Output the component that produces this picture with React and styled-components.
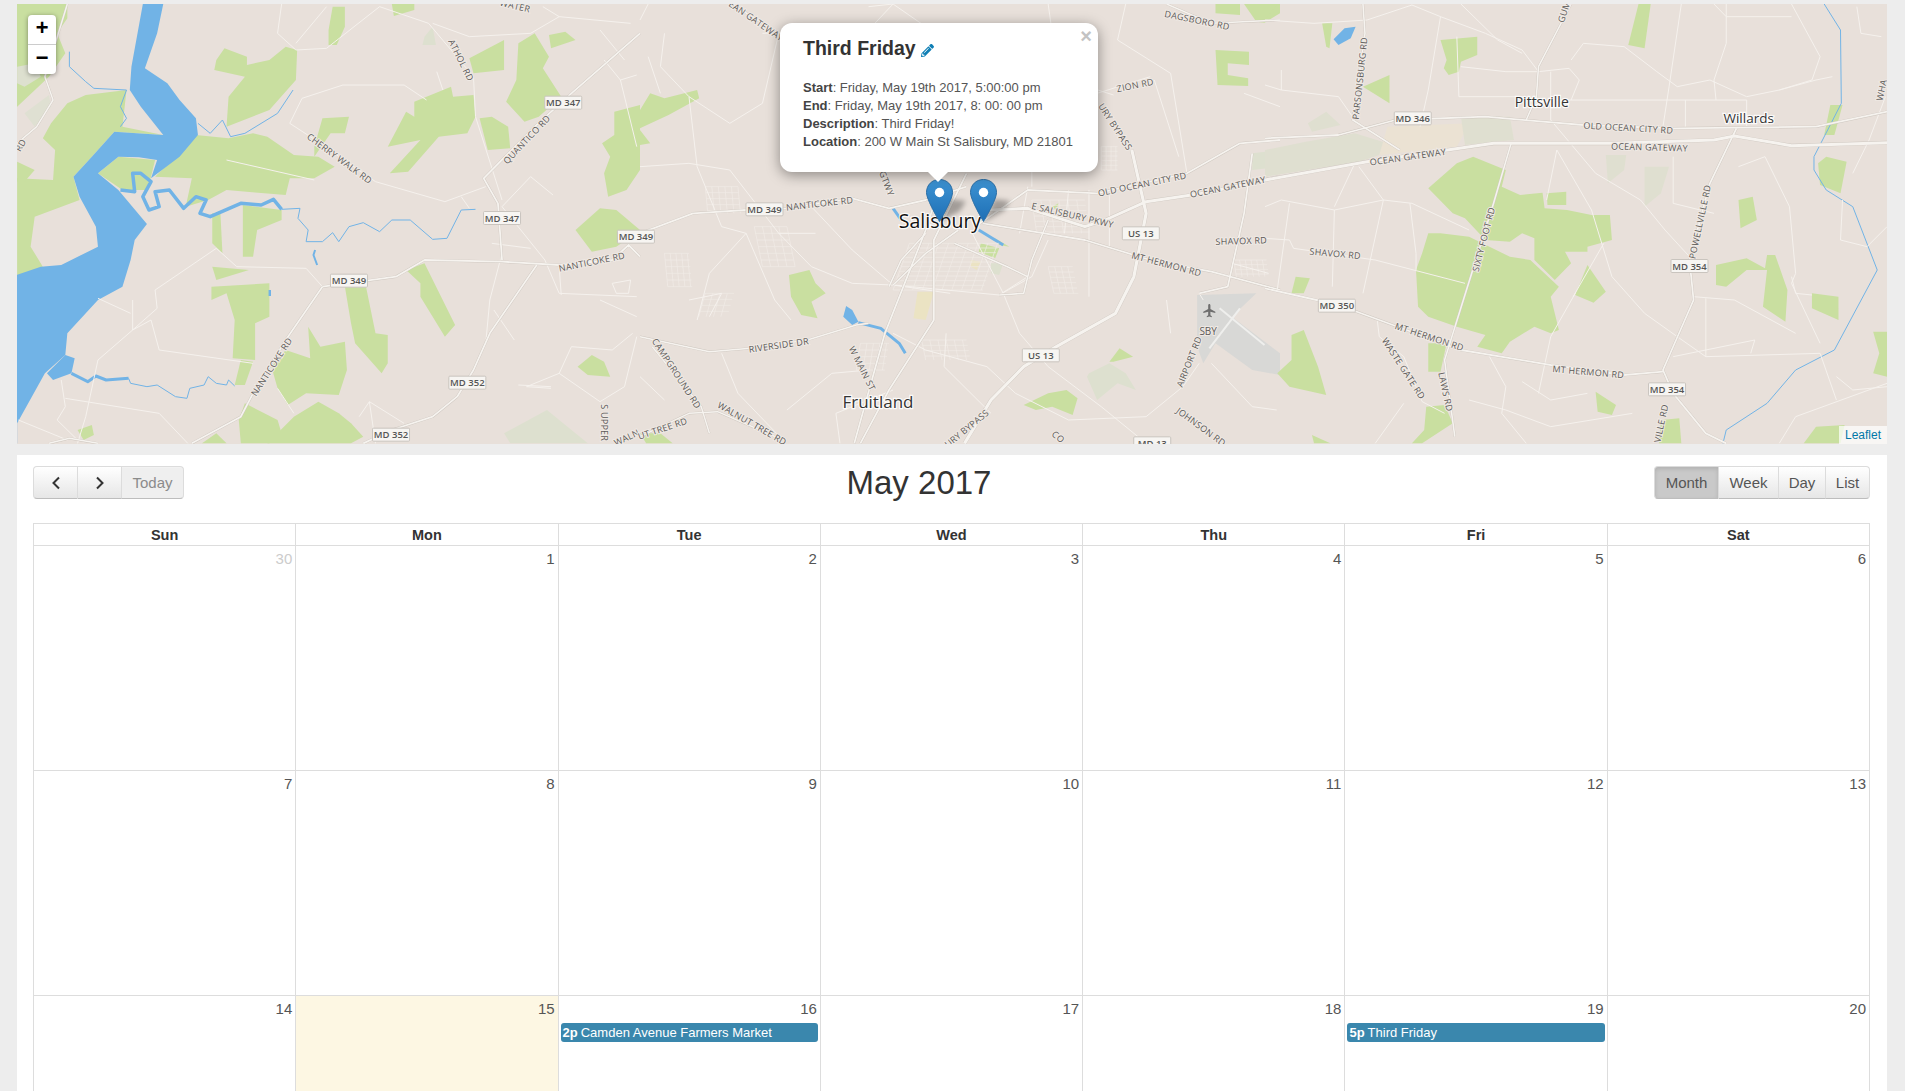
import React from 'react';
import styled, { createGlobalStyle } from 'styled-components';
import { FaPencilAlt } from 'react-icons/fa';

const Global = createGlobalStyle`
  html, body { margin: 0; height: 100%; overflow: hidden; background: #ededed; }
  body { font-family: "Liberation Sans", Arial, sans-serif; color: #333; }
  #root { height: 100%; }
`;

/* ---------- page ---------- */
const Page = styled.div`
  padding: 4px 18px 0 17px;
  height: 100%;
  box-sizing: border-box;
  overflow: hidden;
`;

/* ---------- map ---------- */
const MapFrame = styled.div`
  position: relative;
  height: 440px;
  overflow: hidden;
  background: #e8e0da;
`;
const MapCanvas = styled.svg`
  display: block;
  width: 100%;
  height: 100%;
`;
const BaseLayer = styled.g`
  filter: blur(0.4px);
`;
const RoadLabel = styled.text`
  font-family: "Open Sans", "Liberation Sans", sans-serif;
  font-size: 9px;
  letter-spacing: 0.25px;
  fill: #5c5a58;
  stroke: #efe9e4;
  stroke-width: 2px;
  paint-order: stroke;
  text-anchor: middle;
  dominant-baseline: central;
`;
const ShieldText = styled.text`
  font-family: "Open Sans", "Liberation Sans", sans-serif;
  font-size: 9.5px;
  font-weight: 600;
  fill: #555;
  text-anchor: middle;
  dominant-baseline: central;
`;
const TownLabel = styled.text`
  font-family: "Open Sans", "Noto Sans", sans-serif;
  font-size: ${p => p.$size}px;
  font-weight: ${p => p.$weight};
  fill: ${p => p.$fill};
  stroke: rgba(255, 255, 255, 0.85);
  stroke-width: 2.5px;
  paint-order: stroke;
  text-anchor: middle;
  dominant-baseline: central;
`;

const ZoomBox = styled.div`
  position: absolute;
  left: 11px;
  top: 11px;
  width: 28px;
  background: #fff;
  border-radius: 4px;
  box-shadow: 0 1px 5px rgba(0, 0, 0, 0.4);
`;
const ZoomButton = styled.div`
  height: 29px;
  display: flex;
  align-items: center;
  justify-content: center;
  font: bold 22px/1 "Lucida Console", "Liberation Mono", monospace;
  color: #000;
  & + & { border-top: 1px solid #ccc; }
`;
const Attribution = styled.div`
  position: absolute;
  right: 0;
  bottom: 0;
  padding: 0 6px;
  height: 18px;
  line-height: 18px;
  font-size: 12px;
  color: #0078a8;
  background: rgba(255, 255, 255, 0.7);
`;

const PinWrap = styled.svg`
  position: absolute;
  top: 175px;
  left: ${p => p.$left}px;
  width: 27px;
  height: 43px;
  overflow: visible;
`;

const Popup = styled.div`
  position: absolute;
  left: 763px;
  top: 19px;
  width: 318px;
  height: 149px;
  box-sizing: border-box;
  padding: 14px 23px 0;
  background: #fff;
  border-radius: 12px;
  box-shadow: 0 3px 14px rgba(0, 0, 0, 0.4);
  &::after {
    content: "";
    position: absolute;
    left: 148px;
    bottom: -10px;
    border-left: 10.5px solid transparent;
    border-right: 10.5px solid transparent;
    border-top: 10px solid #fff;
  }
`;
const PopupClose = styled.span`
  position: absolute;
  top: 5px;
  right: 6px;
  font: bold 20px/16px "Liberation Sans", sans-serif;
  color: #c3c3c3;
`;
const PopupTitle = styled.div`
  font-size: 19.5px;
  line-height: 22px;
  font-weight: bold;
  color: #333;
  display: flex;
  align-items: center;
  gap: 5px;
  svg { color: #0f7fb5; width: 13px; height: 13px; margin-top: 5px; }
`;
const PopupBody = styled.div`
  margin-top: 20px;
  font-size: 13px;
  line-height: 18px;
  color: #555;
  b { color: #444; }
`;

/* ---------- calendar ---------- */
const Panel = styled.section`
  margin-top: 11px;
  background: #fff;
  padding: 11px 17px 0 16px;
  min-height: 700px;
`;
const Toolbar = styled.div`
  display: flex;
  justify-content: space-between;
  align-items: center;
  height: 33px;
  margin-bottom: 24px;
`;
const MonthTitle = styled.h2`
  margin: 0;
  font-size: 33px;
  line-height: 33px;
  font-weight: normal;
  color: #333;
`;
const ButtonGroup = styled.div`
  display: flex;
  height: 33px;
`;
const ToolButton = styled.button`
  box-sizing: border-box;
  width: ${p => p.$w}px;
  height: 33px;
  margin: 0;
  padding: 0;
  display: flex;
  align-items: center;
  justify-content: center;
  font: 15px "Liberation Sans", sans-serif;
  color: ${p => (p.$faded ? '#8b8b8b' : '#555')};
  border: 1px solid #dcdcdc;
  border-left-width: ${p => (p.$first ? 1 : 0)}px;
  border-bottom-color: #bdbdbd;
  border-radius: ${p => (p.$first ? '4px 0 0 4px' : p.$last ? '0 4px 4px 0' : '0')};
  background: ${p =>
    p.$active ? '#c9c9c9' : p.$faded ? '#efefef' : 'linear-gradient(#ffffff, #e6e6e6)'};
  box-shadow: ${p =>
    p.$active
      ? 'inset 0 2px 4px rgba(0,0,0,.12)'
      : 'inset 0 1px 0 rgba(255,255,255,.2)'};
`;
const Table = styled.div`
  border-right: 1px solid #ddd;
`;
const HeadRow = styled.div`
  display: grid;
  grid-template-columns: repeat(7, 1fr);
  height: 22px;
  border-top: 1px solid #ddd;
  box-sizing: border-box;
`;
const HeadCell = styled.div`
  border-left: 1px solid #ddd;
  font-size: 14.5px;
  font-weight: bold;
  line-height: 22px;
  text-align: center;
  color: #333;
`;
const WeekRow = styled.div`
  display: grid;
  grid-template-columns: repeat(7, 1fr);
  height: 225px;
  border-top: 1px solid #ddd;
  box-sizing: border-box;
`;
const DayCell = styled.div`
  border-left: 1px solid #ddd;
  background: ${p => (p.$today ? '#fdf7e3' : '#fff')};
  min-width: 0;
`;
const DayNumber = styled.div`
  padding: 3px 3px 0 0;
  font-size: 15px;
  line-height: 20px;
  text-align: right;
  color: ${p => (p.$other ? '#ccc' : '#555')};
`;
const Event = styled.div`
  margin: 4px 2px 0 2px;
  height: 19px;
  padding-left: 2px;
  border-radius: 3px;
  background: #3a87ad;
  color: #fff;
  font-size: 13px;
  line-height: 19px;
  white-space: nowrap;
  overflow: hidden;
  b { margin-right: 3px; }
`;

/* ---------- map data: points are in zone coordinates ---------- */
const SX = 640 / 1568;
const SY = 1 / 3;
const OFF = { A: 0, B: 640, C: 1265 };
const px = (z, x) => OFF[z] + x * SX;
const py = y => y * SY;
const ang = a => {
  if (Math.abs(a) === 90) return a;
  return (Math.atan(Math.tan((a * Math.PI) / 180) * (SY / SX)) * 180) / Math.PI;
};

const GREEN = '#c9dfa0';
const PALE = '#dde0cf';
const WATER = '#71b3e6';

const shapes = {
  A: [
    [GREEN, '17,12 165,12 165,55 140,100 160,160 120,230 42,320 17,300'],
    ['#dde0cf', '42,200 85,190 100,230 60,260 42,250'],
    ['#dfe0d2', '60,340 120,285 125,320 85,380'],
    [GREEN, '42,535 130,540 135,450 105,415 125,370 165,310 210,285 310,270 300,380 400,405 280,395 225,470 180,530 195,600 85,650 75,740 105,800 42,830'],
    [GREEN, '42,485 85,510 60,545 42,545'],
    [GREEN, '480,405 380,530 470,535 455,620 510,600 555,570 700,585 710,535 770,535 820,500 780,470 720,465 655,410 620,400 560,415'],
    [GREEN, '240,520 290,470 380,480 370,530 360,570 300,570'],
    [GREEN, '550,145 605,170 605,195 660,180 700,140 728,150 725,240 660,330 555,380 560,290 600,230 525,210 530,180'],
    [GREEN, '815,20 845,20 845,80 825,135 805,135 805,90'],
    [GREEN, '960,12 1015,12 1015,30 965,48'],
    [GREEN, '1150,175 1235,120 1235,210 1160,220'],
    [GREEN, '1270,130 1310,100 1345,170 1330,205 1375,290 1320,350 1285,365 1240,305 1265,240'],
    [GREEN, '1345,105 1385,95 1410,120 1350,145'],
    [GREEN, '950,440 995,335 1015,350 1015,305 1105,260 1110,290 1160,285 1165,350 1145,400 1075,410 1000,515 955,520 1030,420'],
    [GREEN, '1175,355 1205,350 1245,380 1250,445 1195,450'],
    [GREEN, '790,355 855,350 845,400 810,400 770,470 770,440'],
    [GREEN, '1505,335 1568,315 1568,510 1535,570 1490,590 1480,520 1495,470 1475,430 1505,405'],
    [GREEN, '1410,690 1470,625 1510,630 1568,690 1510,740 1450,755'],
    [GREEN, '520,640 540,640 545,760 520,730'],
    [GREEN, '595,615 690,630 690,660 630,690 620,770 595,770'],
    [GREEN, '520,800 610,810 530,840'],
    [GREEN, '518,860 660,850 660,950 625,970 625,1080 570,1075 575,960 555,880 518,900'],
    [GREEN, '845,860 895,850 920,1000 950,1005 950,1090 935,1120 870,1030 860,970'],
    [GREEN, '995,810 1040,790 1115,975 1090,1010 1030,890 1030,850'],
    [GREEN, '755,980 785,1040 845,1025 850,1110 830,1185 750,1180 705,1215 680,1165 665,1100 700,1050 760,1075'],
    [GREEN, '590,1080 620,1085 600,1155 575,1155'],
    [GREEN, '600,1210 680,1260 690,1300 660,1330 590,1330 585,1260'],
    [GREEN, '720,1250 780,1205 830,1240 860,1270 890,1310 860,1330 655,1330'],
    [GREEN, '1415,1100 1450,1065 1480,1085 1495,1130 1440,1125'],
    [GREEN, '190,1290 225,1275 230,1305 205,1320'],
    [GREEN, '495,1330 530,1300 555,1330'],
    [PALE, '1235,1300 1340,1230 1440,1330 1250,1330'],
    [PALE, '1040,110 1060,80 1068,135 1035,135'],
    [WATER, '350,12 400,12 385,100 355,205 410,250 440,300 480,355 485,405 440,470 370,535 385,480 340,472 290,470 240,520 290,570 360,672 330,720 320,780 300,860 240,900 165,1000 160,1065 110,1120 42,1270 42,1330 17,1330 17,835 100,800 150,795 240,740 235,680 195,590 180,530 225,470 280,395 400,405 345,320 318,270 322,200'],
    [WATER, '115,1120 160,1065 183,1075 175,1120 130,1140'],
    [WATER, '658,870 664,870 664,888 658,888'],
  ],
  B: [
    [GREEN, '0,330 25,280 60,295 140,270 145,295 70,345 0,385'],
    [GREEN, '0,390 25,430 0,435'],
    [GREEN, '365,825 415,810 430,850 455,880 420,905 435,955 395,945 370,890'],
    [GREEN, '1410,12 1470,12 1470,45 1410,40'],
    [GREEN, '1480,12 1568,12 1568,40 1530,68 1510,65'],
    [GREEN, '1410,150 1492,155 1492,195 1440,190 1440,225 1490,235 1490,258 1415,255'],
    [GREEN, '835,730 880,745 870,775 830,755'],
    [GREEN, '870,715 905,740 880,735'],
    [GREEN, '940,1215 1000,1180 1045,1170 1072,1195 1060,1245 1010,1220 970,1230'],
    [GREEN, '1150,1085 1175,1045 1208,1070 1160,1085'],
    [GREEN, '1010,620 1025,610 1020,630'],
    [GREEN, '0,1300 50,1300 80,1330 15,1330'],
    [PALE, '1100,1120 1150,1090 1190,1120 1215,1170 1170,1150 1120,1200 1095,1130'],
    [PALE, '1500,460 1568,450 1568,500 1500,510'],
    [PALE, '860,790 890,790 880,825 860,820'],
    ['#ebe3c3', '680,875 720,875 700,960 670,955'],
    ['#ebe3c3', '810,780 835,785 825,810 810,800'],
    [WATER, '505,918 520,930 535,965 520,975 498,950'],
    ['#d8d8d6', '1365,885 1510,880 1450,950 1568,1060 1568,1125 1500,1110 1410,1030 1380,1090 1365,1040'],
  ],
  C: [
    [GREEN, '0,12 30,12 0,60'],
    [GREEN, '140,70 165,70 158,145 150,140'],
    [GREEN, '240,260 305,225 305,310'],
    [GREEN, '430,120 520,110 520,165 480,185 475,215 450,225 438,205 445,180'],
    [GREEN, '915,12 945,12 930,145 890,135'],
    ['#dfdfd0', '0,450 100,425 220,400 300,430 280,465 230,485 0,530'],
    ['#ebe2d3', '300,380 500,370 470,440 280,465'],
    ['#dfdfd0', '480,350 600,350 610,420 490,435'],
    ['#dfdfd0', '835,465 885,465 880,510 840,550'],
    ['#dfdfd0', '930,500 990,500 970,580 930,620'],
    ['#dfdfd0', '105,370 150,335 185,375 115,395'],
    [GREEN, '400,565 470,490 510,470 590,510 580,560 625,585 680,578 685,625 740,630 800,645 845,645 850,720 790,740 790,755 735,755 750,790 710,840 660,780 660,715 630,700 600,725 540,720 490,655 460,640'],
    [GREEN, '400,700 430,700 500,710 600,770 650,780 720,860 700,890 720,990 700,1000 660,980 600,1025 580,1060 520,1040 540,1005 470,980 400,950 375,920 370,810 385,760'],
    [GREEN, '690,580 738,575 738,615 692,615'],
    [GREEN, '760,885 790,795 835,875 805,908'],
    [GREEN, '400,1030 445,1030 430,1115 400,1115'],
    [GREEN, '395,1220 440,1215 460,1270 385,1330 360,1330 390,1290'],
    [GREEN, '810,1175 860,1215 850,1245 815,1235'],
    [GREEN, '65,1005 95,990 130,1100 150,1185 60,1160 30,1120 65,1080'],
    [GREEN, '65,880 75,830 110,835 95,880'],
    [GREEN, '1160,600 1195,590 1205,660 1165,685'],
    [GREEN, '1105,795 1180,775 1225,805 1230,765 1250,765 1280,870 1275,965 1220,920 1230,810 1180,810 1130,860 1105,855'],
    [GREEN, '1340,880 1405,890 1405,960 1340,925'],
    [GREEN, '1355,490 1375,470 1425,485 1410,580 1360,555'],
    [GREEN, '1490,995 1524,995 1524,1130 1490,1120 1505,1060'],
    [GREEN, '1385,315 1415,315 1395,405 1370,405'],
    [GREEN, '1320,1330 1350,1280 1420,1275 1410,1330'],
    [GREEN, '970,1260 1015,1255 1020,1330 965,1330'],
    [GREEN, '115,1305 160,1330 120,1330'],
    [WATER, '168,118 195,85 222,80 210,115 180,135'],
  ],
};

const streams = {
  A: [
    [1, '170,155 170,200 210,245 230,265 310,270 295,320 310,355 295,380'],
    [1, '485,370 515,400 545,360 565,410 600,400 680,340 718,270'],
    [3.5, '295,570 330,575 325,520 345,520 370,545 350,590 365,630 390,620 380,575 415,570 450,625 480,590 505,600 490,640 515,650 590,610 640,615 670,598 690,628'],
    [1, '690,628 735,625 730,655 755,690 750,725 790,725 815,698 830,725 855,680 890,668 930,695 960,660 1005,660 1060,718 1095,715 1130,630 1165,628'],
    [2, '772,750 768,765 777,795'],
    [3, '175,1120 215,1145 235,1128 260,1140 315,1135'],
    [1, '315,1135 320,1150 360,1160 385,1155 430,1190 458,1195 465,1165 500,1155 510,1130 530,1150 555,1155 560,1140 575,1158'],
  ],
  B: [
    [3, '535,968 590,985 635,1030 650,1060'],
    [3, '620,625 640,660'],
    [3, '830,690 890,735'],
  ],
  C: [
    [1, '1370,12 1410,90 1412,310 1345,470 1345,510 1375,570 1440,620 1500,810 1395,1050 1300,1110 1230,1210 1130,1290 1122,1330'],
  ],
};

const majors = {
  A: [
    [1.8, '1568,100 1400,280 1310,380 1185,535 1220,610 1230,780'],
    [1.8, '790,860 970,830 1040,780 1230,785 1370,795 1500,780 1540,735 1568,770'],
    [1.8, '790,860 700,1020 620,1180 590,1250 470,1330'],
    [1.8, '1315,795 1200,1000 1160,1110 1120,1190 1060,1250 960,1290 890,1330'],
    [1.5, '120,1330 170,1315 240,1330'],
    [1.5, '165,12 110,230 130,300 90,380 42,430'],
  ],
  B: [
    [3.2, '1205,450 1240,640 1210,830 1165,940 1020,1040 940,1100 860,1200 795,1330'],
    [3, '1568,530 1380,580 1240,605 1140,660 1090,680 950,625 850,630'],
    [1.8, '1568,420 1470,430 1340,520 1120,580 950,570 880,630 820,680'],
    [1.8, '840,670 1090,720 1250,780 1400,815 1568,870'],
    [1.8, '0,700 130,640 260,630 360,625 520,595 610,625 700,600 800,560'],
    [1.8, '740,540 700,690 600,1000 525,1330'],
    [1.8, '800,520 720,720 720,960 610,1170 540,1330'],
    [1.5, '0,1010 170,1055 270,1045 410,1020 530,975 560,970'],
    [1.5, '30,1040 150,1220 170,1300'],
    [1.5, '0,1310 120,1240 190,1235 350,1320'],
    [1.5, '225,12 340,100'],
    [1.5, '1290,12 1400,70 1568,60'],
    [1.5, '610,580 590,510'],
    [1.8, '1500,460 1480,640 1440,860 1370,880'],
    [1.6, '620,855 700,760 780,690'],
    [1.6, '610,860 640,780 700,700'],
    [1.6, '950,830 900,800 770,730'],
    [1.6, '880,885 940,880 960,780 1000,660'],
  ],
  C: [
    [3, '0,540 250,485 560,430 850,430 1100,420 1150,408 1290,437 1524,428'],
    [1.8, '0,415 180,405 320,360 540,350 780,375 1000,385 1350,380 1524,335'],
    [1.6, '603,430 560,610 440,1080 465,1310'],
    [1.8, '0,865 180,915 480,1050 700,1095 880,1125 975,1115'],
    [1.8, '1155,385 1090,550 1040,780 1050,900 975,1110 1000,1180 1080,1300 1130,1330'],
    [1.6, '240,12 245,100 215,360 330,450'],
    [1.6, '750,12 670,200 665,290 640,360'],
  ],
};

const minors = {
  A: [
    '690,12 680,100 725,150 800,145 930,20 1050,70 1160,230 1165,350 1230,600',
    '800,20 725,130',
    '740,295 840,255 990,255 1045,300',
    '740,295 710,370 760,410 920,545 1090,605 1190,560',
    '1070,215 1085,270',
    '1060,70 1150,110 1300,100 1370,50 1545,70',
    '1370,50 1330,20',
    '555,480 770,540',
    '530,745 380,870 385,925 325,990',
    '530,745 580,800 750,805 790,860',
    '325,900 325,990 370,960 390,1050 620,1090',
    '325,990 240,1080 210,1250 190,1330',
    '150,1140 160,1220 140,1260 190,1320',
    '160,1195 390,1240 460,1330',
    '45,1260 165,1320',
    '240,895 320,940',
    '680,1165 720,1240',
    '880,1250 905,1205 990,1270',
    '1190,1030 1200,900 1230,760',
    '1210,930 1260,1020',
    '1400,1040 1370,1120 1470,1205 1530,1160 1560,1010',
    '1400,1040 1500,1050 1550,1000',
    '1370,1120 1290,1160 1350,1165',
    '1300,530 1230,620 1335,780 1370,880 1560,890',
    '1300,530 1355,585',
    '1370,800 1375,885',
    '1470,900 1560,950',
    '1205,730 1300,745',
    '1520,240 1560,225',
    '1480,180 1520,240 1560,440',
    '1470,90 1530,180',
    '920,1330 905,1205',
    '1270,1155 1350,1160',
    '1500,850 1545,840 1540,880 1510,880 1500,850',
    '1130,590 1150,625',
  ],
  B: [
    '20,12 0,60', '0,500 120,490 220,510 340,700 430,700',
    '60,100 50,200 120,290 220,370 300,310 340,100 300,100',
    '120,290 140,500 200,680 260,700',
    '20,170 50,280', '260,700 170,820 140,960',
    '260,700 330,900 370,960', '340,700 420,800 520,850 620,855 880,885 950,830',
    '620,855 760,880', '420,620 520,750 620,855',
    '1000,12 1010,100 960,290 960,560', '1190,12 1170,120 1300,220 1340,520',
    '1260,240 1320,470', '1020,230 1160,285', '1120,280 1250,230',
    '1100,570 1100,890', '1000,720 960,830 880,885',
    '950,560 930,700', '1050,570 1040,700', '1150,580 1150,740',
    '0,1130 60,1200', '360,1230 470,1120 560,1110', '200,1060 240,1180 350,1320',
    '620,1000 700,1050 850,1100 920,1180 1050,1260 1240,1250',
    '1240,1250 1330,1160 1370,1090', '1000,1100 1130,1220 1220,1310',
    '750,1000 745,1100 860,1240', '810,690 890,880 930,1000 1000,1100',
    '490,1330 480,1240 620,1170', '1380,900 1370,880',
    '1290,900 1300,1000', '1400,1090 1500,1220 1560,1230',
    '560,20 620,12 700,80', '620,12 560,90',
    '480,120 520,260 470,380', '1480,280 1568,320',
    '120,900 200,880 170,950', '1450,790 1540,820',
  ],
  C: [
    '0,60 120,70 250,60 360,15 430,50 540,100 630,150 670,215',
    '430,50 400,270 380,380',
    '480,12 570,120 630,160',
    '470,110 475,290 640,290',
    '480,200 590,215 670,215 745,205 770,240 750,300',
    '700,215 700,360 810,520 920,600 980,690 1040,770',
    '700,300 1180,300 1180,380',
    '750,180 780,130 880,140 960,215 1010,260 1090,240 1180,290 1260,270 1350,240 1390,230',
    '1020,12 990,260 975,380',
    '1130,12 1130,130 1100,240 1105,300',
    '1030,300 1030,380',
    '1290,12 1360,170 1340,240 1260,270',
    '1100,12 1130,50 1290,50',
    '1450,20 1460,100 1510,110',
    '1520,290 1480,420 1440,520',
    '0,255 40,270 180,290 220,360',
    '40,210 40,270',
    '0,620 40,600 170,630 290,600 360,610 500,690',
    '60,610 30,870', '170,630 165,860', '290,600 240,880',
    '0,715 60,720 70,745 270,780 490,850',
    '355,610 370,760 370,810',
    '220,490 170,620', '230,500 290,600',
    '715,450 800,630 850,830 930,940 1010,1010 1080,1070 1360,1060 1400,1200',
    '715,450 690,600', '760,880 700,1010 670,1180',
    '830,730 755,890',
    '1225,470 1285,620 1300,820 1290,850 1360,1030',
    '1050,890 1150,900 1300,1000',
    '1080,895 1080,1070',
    '1000,610 1100,640', '1000,470 1000,610',
    '1415,600 1410,720 1475,740 1524,680',
    '1290,830 1300,880 1340,885',
    '1160,500 1225,470',
    '275,960 280,1010 340,1070 385,1205 440,1240',
    '550,1070 590,1160 580,1240 640,1330',
    '630,1145 700,1200 790,1180',
    '1000,1070 1200,1020 1190,1060',
    '1260,1330 1300,1250 1524,1150',
    '1400,1130 1440,1170 1524,1160',
    '340,1210 270,1330',
    '500,1200 590,1230 700,1280 900,1240',
  ],
};

const blockGrid = (x0, y0, x1, y1, dx, dy, skew) => {
  const out = [];
  for (let x = x0; x <= x1; x += dx) out.push(`${x},${y0} ${x + skew},${y1}`);
  for (let y = y0; y <= y1; y += dy) {
    const s = ((y - y0) / (y1 - y0)) * skew;
    out.push(`${x0 + s},${y} ${x1 + s},${y}`);
  }
  return out;
};
const texture = [
  ...blockGrid(660, 730, 880, 870, 24, 14, -40),
  ...blockGrid(960, 600, 1090, 700, 22, 16, 12),
  ...blockGrid(280, 680, 360, 800, 20, 20, 20),
  ...blockGrid(160, 560, 240, 640, 16, 18, 6),
  ...blockGrid(160, 880, 230, 950, 18, 18, -16),
  ...blockGrid(60, 760, 120, 860, 14, 20, 8),
  ...blockGrid(1000, 800, 1060, 880, 16, 16, 14),
  ...blockGrid(690, 1020, 800, 1080, 20, 16, 10),
  ...blockGrid(540, 1030, 610, 1110, 16, 20, -10),
  ...blockGrid(1130, 440, 1170, 510, 12, 14, 0),
  ...blockGrid(1455, 780, 1535, 830, 14, 14, 6),
];

const roadLabels = [
  ['A', 1130, 180, 68, 'ATHOL RD'],
  ['A', 832, 475, 42, 'CHERRY WALK RD'],
  ['A', 1290, 418, -52, 'QUANTICO RD'],
  ['A', 1450, 785, -14, 'NANTICOKE RD'],
  ['A', 665, 1100, -62, 'NANTICOKE RD'],
  ['A', 1482, 1268, 90, 'S UPPER'],
  ['A', 1535, 1312, -30, 'WALN'],
  ['A', 50, 435, -65, 'RD'],
  ['A', 1262, 17, 16, 'WATER'],
  ['B', 285, 62, 40, 'EAN GATEWAY'],
  ['B', 1365, 60, 14, 'DAGSBORO RD'],
  ['B', 1213, 255, -14, 'ZION RD'],
  ['B', 1165, 380, 62, 'URY BYPASS'],
  ['B', 1230, 552, -14, 'OLD OCEAN CITY RD'],
  ['B', 1440, 560, -14, 'OCEAN GATEWAY'],
  ['B', 1060, 645, 16, 'E SALISBURY PKWY'],
  ['B', 1473, 722, -2, 'SHAVOX RD'],
  ['B', 1290, 792, 18, 'MT HERMON RD'],
  ['B', 440, 610, -8, 'NANTICOKE RD'],
  ['B', 605, 550, 72, 'GTWY'],
  ['B', 340, 1035, -10, 'RIVERSIDE DR'],
  ['B', 545, 1105, 68, 'W MAIN ST'],
  ['B', 90, 1120, 62, 'CAMPGROUND RD'],
  ['B', 275, 1270, 35, 'WALNUT TREE RD'],
  ['B', 55, 1285, -22, 'UT TREE RD'],
  ['B', 800, 1285, -45, 'URY BYPASS'],
  ['B', 1345, 1085, -72, 'AIRPORT RD'],
  ['B', 1375, 1280, 42, 'JOHNSON RD'],
  ['B', 1025, 1310, 45, 'CO'],
  ['C', 232, 235, -85, 'PARSONSBURG RD'],
  ['C', 732, 35, -75, 'GUM'],
  ['C', 890, 383, 4, 'OLD OCEAN CITY RD'],
  ['C', 350, 470, -10, 'OCEAN GATEWAY'],
  ['C', 942, 441, 2, 'OCEAN GATEWAY'],
  ['C', 535, 718, -78, 'SIXTY FOOT RD'],
  ['C', 1065, 665, -80, 'POWELLVILLE RD'],
  ['C', 172, 760, 6, 'SHAVOX RD'],
  ['C', 403, 1010, 22, 'MT HERMON RD'],
  ['C', 792, 1115, 6, 'MT HERMON RD'],
  ['C', 340, 1105, 62, 'WASTE GATE RD'],
  ['C', 443, 1175, 80, 'LAWS RD'],
  ['C', 970, 1270, -80, 'VILLE RD'],
  ['C', 1510, 270, -80, 'WHA'],
];

const shields = [
  ['A', 1380, 308, 'MD 347'],
  ['A', 1230, 654, 'MD 347'],
  ['A', 855, 842, 'MD 349'],
  ['A', 1145, 1148, 'MD 352'],
  ['A', 958, 1304, 'MD 352'],
  ['A', 1558, 710, 'MD 349'],
  ['B', 305, 628, 'MD 349'],
  ['B', 1227, 700, 'US 13'],
  ['B', 982, 1066, 'US 13'],
  ['B', 1255, 1330, 'MD 13'],
  ['C', 362, 355, 'MD 346'],
  ['C', 1040, 798, 'MD 354'],
  ['C', 985, 1168, 'MD 354'],
  ['C', 176, 917, 'MD 350'],
];

const towns = [
  ['B', 735, 662, 'Salisbury', 19.5, 500, '#111'],
  ['B', 583, 1203, 'Fruitland', 17, 500, '#333'],
  ['C', 678, 303, 'Pittsville', 14, 400, '#333'],
  ['C', 1185, 355, 'Willards', 13.500, 500, '#333'],
];

const Zone = ({ z }) => (
  <g transform={`translate(${OFF[z]},0) scale(${SX},${SY})`}>
    {shapes[z].map(([fill, points], i) => (
      <polygon key={i} points={points} fill={fill} />
    ))}
    {streams[z].map(([w, points], i) => (
      <polyline key={i} points={points} fill="none" stroke={WATER} strokeWidth={w} strokeLinejoin="round" vectorEffect="non-scaling-stroke" />
    ))}
    {z === 'B' &&
      texture.map((points, i) => (
        <polyline key={i} points={points} fill="none" stroke="#f0ebe6" strokeWidth={0.7} vectorEffect="non-scaling-stroke" />
      ))}
    {minors[z].map((points, i) => (
      <polyline key={i} points={points} fill="none" stroke="#f5f1ed" strokeWidth={1} strokeLinejoin="round" vectorEffect="non-scaling-stroke" />
    ))}
    {majors[z].map(([w, points], i) => (
      <polyline key={'c' + i} points={points} fill="none" stroke="#cdc6bf" strokeWidth={w + 0.7} strokeLinejoin="round" vectorEffect="non-scaling-stroke" />
    ))}
    {majors[z].map(([w, points], i) => (
      <polyline key={'f' + i} points={points} fill="none" stroke="#f6f3ef" strokeWidth={w} strokeLinejoin="round" vectorEffect="non-scaling-stroke" />
    ))}
    {z === 'B' && (
      <>
        <polyline points="1395,1045 1470,925" fill="none" stroke="#efefed" strokeWidth={2} vectorEffect="non-scaling-stroke" />
        <polyline points="1420,925 1530,1035" fill="none" stroke="#efefed" strokeWidth={2} vectorEffect="non-scaling-stroke" />
      </>
    )}
  </g>
);

const MapArt = () => (
  <MapCanvas viewBox="17 4 1870 440" preserveAspectRatio="none">
    <BaseLayer>
      <Zone z="A" />
      <Zone z="B" />
      <Zone z="C" />
    </BaseLayer>
    {roadLabels.map(([z, x, y, a, t], i) => (
      <RoadLabel key={i} x={px(z, x)} y={py(y)} transform={`rotate(${ang(a)} ${px(z, x)} ${py(y)})`}>
        {t}
      </RoadLabel>
    ))}
    {shields.map(([z, x, y, t], i) => (
      <g key={i}>
        <rect x={px(z, x) - 18.5} y={py(y) - 6.5} width={37} height={13} rx={1} fill="#f7f5f2" stroke="#c9c4be" strokeWidth={1} />
        <ShieldText x={px(z, x)} y={py(y)}>{t}</ShieldText>
      </g>
    ))}
    {towns.map(([z, x, y, t, s, w, f], i) => (
      <TownLabel key={i} x={px(z, x)} y={py(y)} $size={s} $weight={w} $fill={f}>{t}</TownLabel>
    ))}
    <path
      transform="translate(1203 304) scale(0.7)"
      d="M9 0c1 0 1.600 1 1.600 2v5l7 4v2l-7-2v5l2 1.500V19l-3.600-1-3.600 1v-1.500l2-1.500v-5l-7 2v-2l7-4V2C7.400 1 8 0 9 0z"
      fill="#6e6e6e"
    />
    <RoadLabel x={px('B', 1392)} y={py(992)} style={{ letterSpacing: 0, fontSize: 10 }}>SBY</RoadLabel>
  </MapCanvas>
);

const Pin = ({ left, id }) => (
  <PinWrap $left={left} viewBox="0 0 27 43">
    <defs>
      <linearGradient id={id} x1="0" y1="0" x2="0" y2="1">
        <stop offset="0" stopColor="#3d93d3" />
        <stop offset="1" stopColor="#1e6fb5" />
      </linearGradient>
      <filter id={id + 'b'} x="-50%" y="-50%" width="200%" height="200%">
        <feGaussianBlur stdDeviation="2.500" />
      </filter>
    </defs>
    <polygon points="13.500,43 24,20 40,22 34,32" fill="rgba(0,0,0,.3)" filter={`url(#${id}b)`} />
    <path
      d="M13.500 0.500C6 0.500 0.500 6 0.500 13.500C0.500 21 13.500 42.500 13.500 42.500C13.500 42.500 26.500 21 26.500 13.500C26.500 6 21 0.500 13.500 0.500Z"
      fill={`url(#${id})`}
      stroke="#2a6ea6"
      strokeWidth="1"
    />
    <circle cx="13.500" cy="13.500" r="4.700" fill="#fff" />
  </PinWrap>
);

const weeks = [
  [30, 1, 2, 3, 4, 5, 6],
  [7, 8, 9, 10, 11, 12, 13],
  [14, 15, 16, 17, 18, 19, 20],
];
const dayNames = ['Sun', 'Mon', 'Tue', 'Wed', 'Thu', 'Fri', 'Sat'];
const events = {
  16: ['2p', 'Camden Avenue Farmers Market'],
  19: ['5p', 'Third Friday'],
};

const Chevron = ({ flip }) => (
  <svg width="10" height="14" viewBox="0 0 10 14" style={{ transform: flip ? 'scaleX(-1)' : undefined }}>
    <polyline points="8,1.500 2.500,7 8,12.500" fill="none" stroke="#333" strokeWidth="2" />
  </svg>
);

export default function App() {
  return (
    <Page>
      <Global />
      <MapFrame>
        <MapArt />
        <ZoomBox>
          <ZoomButton>+</ZoomButton>
          <ZoomButton>−</ZoomButton>
        </ZoomBox>
        <Pin left={909} id="pinA" />
        <Pin left={953} id="pinB" />
        <Popup>
          <PopupClose>×</PopupClose>
          <PopupTitle>
            Third Friday <FaPencilAlt />
          </PopupTitle>
          <PopupBody>
            <div><b>Start</b>: Friday, May 19th 2017, 5:00:00 pm</div>
            <div><b>End</b>: Friday, May 19th 2017, 8: 00: 00 pm</div>
            <div><b>Description</b>: Third Friday!</div>
            <div><b>Location</b>: 200 W Main St Salisbury, MD 21801</div>
          </PopupBody>
        </Popup>
        <Attribution>Leaflet</Attribution>
      </MapFrame>
      <Panel>
        <Toolbar>
          <ButtonGroup>
            <ToolButton $w={45} $first><Chevron /></ToolButton>
            <ToolButton $w={44}><Chevron flip /></ToolButton>
            <ToolButton $w={62} $last $faded>Today</ToolButton>
          </ButtonGroup>
          <MonthTitle>May 2017</MonthTitle>
          <ButtonGroup>
            <ToolButton $w={65} $first $active>Month</ToolButton>
            <ToolButton $w={60}>Week</ToolButton>
            <ToolButton $w={47}>Day</ToolButton>
            <ToolButton $w={44} $last>List</ToolButton>
          </ButtonGroup>
        </Toolbar>
        <Table>
          <HeadRow>
            {dayNames.map(d => <HeadCell key={d}>{d}</HeadCell>)}
          </HeadRow>
          {weeks.map((w, i) => (
            <WeekRow key={i}>
              {w.map(d => (
                <DayCell key={d} $today={d === 15}>
                  <DayNumber $other={d === 30}>{d}</DayNumber>
                  {events[d] && (
                    <Event><b>{events[d][0]}</b>{events[d][1]}</Event>
                  )}
                </DayCell>
              ))}
            </WeekRow>
          ))}
        </Table>
      </Panel>
    </Page>
  );
}
